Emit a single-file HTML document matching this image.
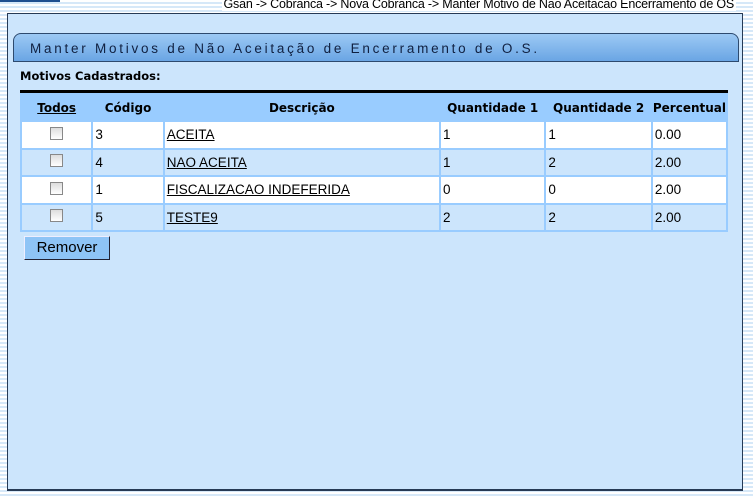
<!DOCTYPE html>
<html><head><style>
body{margin:0;width:753px;height:497px;overflow:hidden;background:repeating-linear-gradient(#fff 0 2px,#d6e8f8 2px 4px);font-family:"Liberation Sans",sans-serif;position:relative}
.topbar{position:absolute;left:0;top:0;width:60px;height:2px;background:#1f4f8f}
.bc{position:absolute;right:17px;top:-3px;font-size:12.5px;color:#000;background:#fff;padding:0 2px;letter-spacing:-0.2px}
.panel{position:absolute;left:7px;top:13px;width:734px;height:475px;background:#cce5fc;border:1px solid #263a55;border-width:1px 1px 2px 1px}
.title{position:absolute;left:5px;top:19px;height:29px;border:1px solid #2d4a6e;border-radius:8px 8px 0 0;background:linear-gradient(#9cc9f4,#6aa5e4);font-size:13.5px;letter-spacing:2.75px;color:#102040;line-height:30px;padding-left:16px;box-sizing:border-box;width:726px}
.lbl{position:absolute;left:12px;top:55px;font-family:"DejaVu Sans",sans-serif;font-weight:bold;font-size:11.5px}
table{position:absolute;left:12px;top:76px;width:708px;border-collapse:separate;border-spacing:2px;border-top:3px solid #000;background:#99ccff;font-size:13.5px}
th{height:25px;font-family:"DejaVu Sans",sans-serif;font-size:12px;font-weight:bold;background:#99ccff;text-align:center;padding:0}
td{height:25.5px;padding:0 2px;}
tr.w td{background:#fff}tr.b td{background:#cce5fc}
td a{color:#000;text-decoration:underline}
.cb{width:11px;height:11px;border:1px solid #888;background:linear-gradient(#ddd,#fff);display:inline-block}
.btn{position:absolute;left:16px;top:222px;width:84px;height:22px;background:#8ec4f6;border:1px solid #223;border-top-color:#eef;border-left-color:#eef;font-size:15px;text-align:center;line-height:22px}
</style></head><body>
<div class="topbar"></div>
<div class="panel">
<div class="title">Manter Motivos de Não Aceitação de Encerramento de O.S.</div>
<div class="lbl">Motivos Cadastrados:</div>
<table>
<tr><th style="width:70px"><u>Todos</u></th><th style="width:70px">Código</th><th style="width:278px">Descrição</th><th style="width:104px">Quantidade 1</th><th style="width:105px">Quantidade 2</th><th>Percentual</th></tr>
<tr class="w"><td style="text-align:center"><span class="cb"></span></td><td>3</td><td><a>ACEITA</a></td><td>1</td><td>1</td><td>0.00</td></tr>
<tr class="b"><td style="text-align:center"><span class="cb"></span></td><td>4</td><td><a>NAO ACEITA</a></td><td>1</td><td>2</td><td>2.00</td></tr>
<tr class="w"><td style="text-align:center"><span class="cb"></span></td><td>1</td><td><a>FISCALIZACAO INDEFERIDA</a></td><td>0</td><td>0</td><td>2.00</td></tr>
<tr class="b"><td style="text-align:center"><span class="cb"></span></td><td>5</td><td><a>TESTE9</a></td><td>2</td><td>2</td><td>2.00</td></tr>
</table>
<div class="btn">Remover</div>
</div>
<div class="bc">Gsan -&gt; Cobranca -&gt; Nova Cobranca -&gt; Manter Motivo de Nao Aceitacao Encerramento de OS</div>
</body></html>
